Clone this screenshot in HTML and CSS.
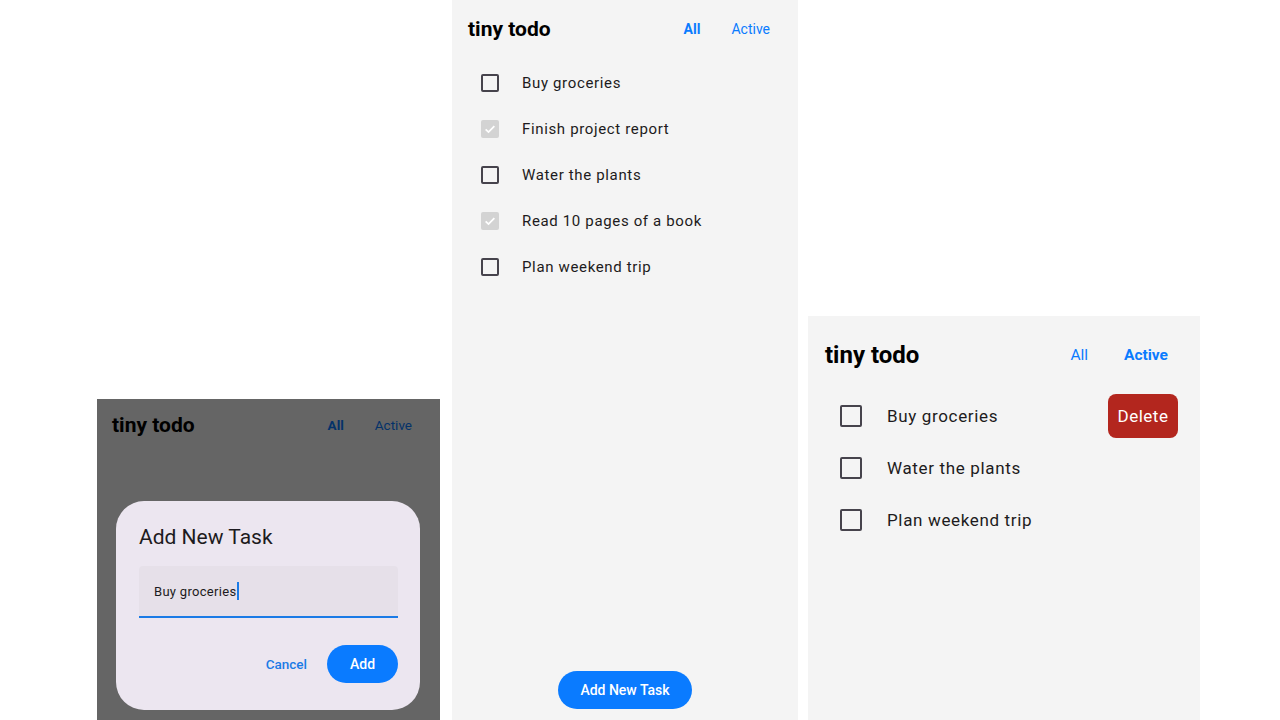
FILE: index.html
```html
<!DOCTYPE html>
<html>
<head>
<meta charset="utf-8">
<link rel="stylesheet" href="styles.css">
</head>
<body>
<div class="stage">
  <!-- Left: dialog screen -->
  <section class="phone phone-left">
    <header class="hdr hdr-left">
      <h1 class="title">tiny todo</h1>
      <nav class="nav">
        <span class="tab active">All</span>
        <span class="tab">Active</span>
      </nav>
    </header>
    <div class="scrim"></div>
    <div class="dialog">
      <h2 class="dlg-title">Add New Task</h2>
      <div class="field"><span class="field-text">Buy groceries</span><span class="caret"></span></div>
      <div class="dlg-actions">
        <button class="btn-text">Cancel</button>
        <button class="btn-pill btn-add">Add</button>
      </div>
    </div>
  </section>

  <!-- Middle: full list -->
  <section class="phone phone-mid">
    <header class="hdr hdr-mid">
      <h1 class="title">tiny todo</h1>
      <nav class="nav">
        <span class="tab active">All</span>
        <span class="tab">Active</span>
      </nav>
    </header>
    <ul class="list list-mid">
      <li class="row"><span class="cb"></span><span class="label">Buy groceries</span></li>
      <li class="row"><span class="cb checked"><svg viewBox="0 0 18 18"><path d="M3.4 9.4l3.7 3.6 7.5-7.6" fill="none" stroke="#fff" stroke-width="2.3"/></svg></span><span class="label">Finish project report</span></li>
      <li class="row"><span class="cb"></span><span class="label">Water the plants</span></li>
      <li class="row"><span class="cb checked"><svg viewBox="0 0 18 18"><path d="M3.4 9.4l3.7 3.6 7.5-7.6" fill="none" stroke="#fff" stroke-width="2.3"/></svg></span><span class="label">Read 10 pages of a book</span></li>
      <li class="row"><span class="cb"></span><span class="label">Plan weekend trip</span></li>
    </ul>
    <div class="mid-footer">
      <button class="btn-pill btn-new">Add New Task</button>
    </div>
  </section>

  <!-- Right: active with delete -->
  <section class="phone phone-right">
    <header class="hdr hdr-right">
      <h1 class="title">tiny todo</h1>
      <nav class="nav">
        <span class="tab">All</span>
        <span class="tab active">Active</span>
      </nav>
    </header>
    <ul class="list list-right">
      <li class="row"><span class="cb"></span><span class="label">Buy groceries</span><button class="btn-delete">Delete</button></li>
      <li class="row"><span class="cb"></span><span class="label">Water the plants</span></li>
      <li class="row"><span class="cb"></span><span class="label">Plan weekend trip</span></li>
    </ul>
  </section>
</div>
</body>
</html>
```
FILE: styles.css
```css
* { box-sizing: border-box; }
html, body { margin: 0; padding: 0; background: #fff; }
body { width: 1280px; height: 720px; overflow: hidden; font-family: Roboto, "Noto Sans", sans-serif; color: #1d1b20; }
ul { list-style: none; margin: 0; padding: 0; }
h1, h2 { margin: 0; font-weight: normal; }
button { font-family: inherit; border: 0; cursor: pointer; }

.stage { display: flex; align-items: flex-end; height: 720px; padding-left: 97px; }

.phone { background: #f4f4f4; position: relative; display: flex; flex-direction: column; overflow: hidden; }
.phone-left { width: 343px; height: 321px; }
.phone-mid { width: 346px; height: 720px; margin-left: 12px; }
.phone-right { width: 392px; height: 404px; margin-left: 10px; }

.hdr { display: flex; align-items: center; justify-content: space-between; }
.title { font-weight: 700; color: #000; }
.nav { display: flex; align-items: center; }
.tab { color: #0a7bff; font-weight: 400; }
.tab.active { font-weight: 700; }

.hdr-left { height: 52px; padding: 0 28px 0 15px; }
.hdr-left .title { font-size: 21px; }
.hdr-left .nav { gap: 31px; font-size: 13.5px; }

.hdr-mid { height: 58px; padding: 0 28px 0 16px; }
.hdr-mid .title { font-size: 21px; }
.hdr-mid .nav { gap: 31px; font-size: 14px; }

.hdr-right { height: 74px; padding: 4px 32px 0 17px; }
.hdr-right .title { font-size: 24px; }
.hdr-right .nav { gap: 36px; font-size: 15.5px; }

.row { display: flex; align-items: center; }
.cb { flex: none; border: 2px solid #46434c; border-radius: 2px; display: flex; align-items: center; justify-content: center; }
.cb.checked { border-color: #d3d3d3; background: #d3d3d3; }
.cb svg { width: 100%; height: 100%; }
.label { color: #1d1b20; letter-spacing: 0.65px; }

.list-mid { margin-top: 2px; }
.list-mid .row { height: 46px; padding-left: 29px; }
.list-mid .cb { width: 18px; height: 18px; }
.list-mid .label { font-size: 15px; margin-left: 23px; }

.mid-footer { margin-top: auto; display: flex; justify-content: center; padding-bottom: 11px; }
.btn-pill { background: #0a7bff; color: #fff; border-radius: 999px; font-weight: 500; }
.btn-new { width: 134px; height: 38px; font-size: 14px; }

.list-right .row { height: 52px; padding-left: 32px; padding-right: 22px; }
.list-right .cb { width: 22px; height: 22px; }
.list-right .label { font-size: 17px; margin-left: 25px; }
.btn-delete { margin-left: auto; width: 70px; height: 44px; border-radius: 8px; background: #b3261e; color: #fff; font-size: 17px; letter-spacing: 0.5px; }

.scrim { position: absolute; inset: 0; background: rgba(0, 0, 0, 0.59); }
.dialog { position: absolute; left: 19px; top: 102px; width: 304px; height: 209px; background: #ece6f0; border-radius: 28px; padding: 24px 22px 27px 23px; display: flex; flex-direction: column; }
.dlg-title { font-size: 21px; font-weight: 400; color: #1d1b20; line-height: 24px; }
.field { margin-top: 17px; height: 52px; background: #e6e0e9; border-radius: 4px 4px 0 0; border-bottom: 2px solid #1b7be6; display: flex; align-items: center; padding-left: 15px; }
.field-text { font-size: 13px; color: #1d1b20; letter-spacing: 0.3px; }
.caret { width: 2px; height: 18px; background: #1b7be6; margin-left: 1px; }
.dlg-actions { margin-top: auto; display: flex; justify-content: flex-end; align-items: center; gap: 20px; }
.btn-text { background: none; color: #1b7be6; font-size: 13.5px; font-weight: 500; padding: 0; }
.btn-add { width: 71px; height: 38px; font-size: 14px; }
```
